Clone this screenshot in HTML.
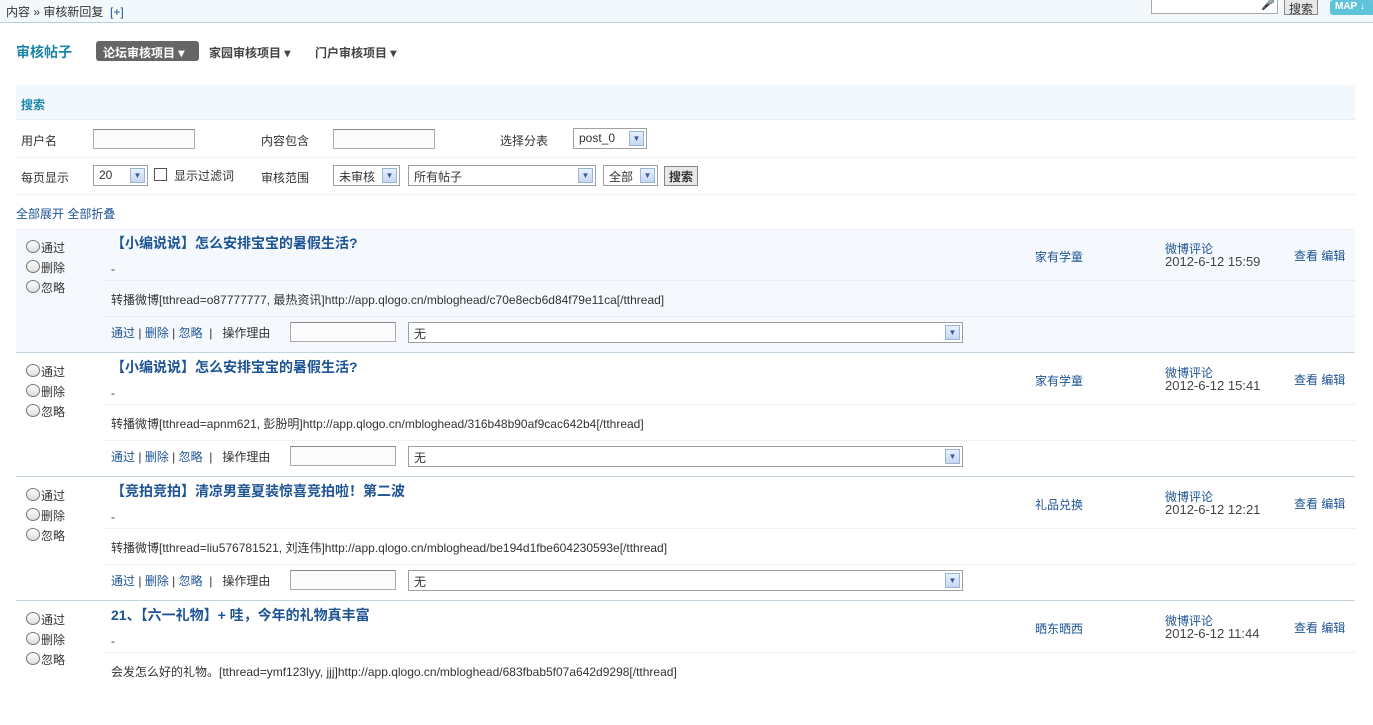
<!DOCTYPE html>
<html><head><meta charset="utf-8"><style>
*{margin:0;padding:0;box-sizing:border-box}
body{width:1373px;height:684px;overflow:hidden;background:#fff;font-family:"Liberation Sans","Noto Sans CJK SC",sans-serif;font-size:12px;color:#333;position:relative}
.a{position:absolute;white-space:nowrap}
.top{position:absolute;left:0;top:0;width:1373px;height:23px;background:#f2f8fc;border-bottom:1px solid #b8cfdc}
.lnk{color:#1e5494}
.inp{position:absolute;height:20px;border:1px solid #aaa;background:#fbfbfb;border-top-color:#888}
.sel{position:absolute;height:21px;border:1px solid #a0a0a0;background:#fff;padding:2px 5px;font-size:12px}
.sel i{position:absolute;right:2px;top:2px;width:15px;height:15px;border:1px solid #9bb4d6;background:linear-gradient(#e8f0fc,#c5d7f2);font-style:normal;color:#3b5c98;font-size:8px;text-align:center;line-height:14px}
.btn{position:absolute;border:1px solid #888;background:#e8e8e8;padding:1px 4px;font-size:12px}
.dot{border-top:1px dotted #dde3ea}
.post{position:absolute;left:16px;width:1339px;height:124px;border-bottom:1px solid #c5d3dd}
.r{position:absolute;left:10px;width:14px;height:13px;border:1px solid #777;border-radius:50%;background:linear-gradient(#fff,#ddd)}
.t{font-weight:bold;font-size:14px;color:#1e5494}
</style></head><body>
<div class="top"></div>
<div class="a" style="left:6px;top:3px;color:#333">内容 » 审核新回复 &nbsp;<span class="lnk">[+]</span></div>
<div class="inp" style="left:1151px;top:-6px;width:127px;height:20px;background:#fff"></div>
<div class="a" style="left:1261px;top:-2px;font-size:11px">🎤</div>
<div class="btn" style="left:1284px;top:-3px;height:18px;padding-top:2px">搜索</div>
<div class="a" style="left:1330px;top:0;width:45px;height:15px;background:#5fc3da;border-radius:3px;color:#fff;font-weight:bold;font-size:10px;padding-left:5px;line-height:14px">MAP ↓</div>

<div class="a" style="left:16px;top:42px;font-size:14px;font-weight:bold;color:#1c86a8">审核帖子</div>
<div class="a" style="left:96px;top:41px;height:20px;width:103px;background:#666;border-radius:3px;color:#fff;font-weight:bold;padding:3px 7px">论坛审核项目 ▾</div>
<div class="a" style="left:209px;top:44px;font-weight:bold;color:#444">家园审核项目 ▾</div>
<div class="a" style="left:315px;top:44px;font-weight:bold;color:#444">门户审核项目 ▾</div>

<div class="a" style="left:16px;top:85px;width:1339px;height:35px;background:#f2f8fc;border-bottom:1px dotted #dde3ea"></div>
<div class="a" style="left:21px;top:96px;font-weight:bold;color:#1c86a8">搜索</div>
<div class="a" style="left:16px;top:157px;width:1339px" class="dot"></div>
<div class="a dot" style="left:16px;top:157px;width:1339px"></div>
<div class="a dot" style="left:16px;top:194px;width:1339px"></div>

<div class="a" style="left:21px;top:132px">用户名</div>
<div class="inp" style="left:93px;top:129px;width:102px"></div>
<div class="a" style="left:261px;top:132px">内容包含</div>
<div class="inp" style="left:333px;top:129px;width:102px"></div>
<div class="a" style="left:500px;top:132px">选择分表</div>
<div class="sel" style="left:573px;top:128px;width:74px">post_0<i>▼</i></div>

<div class="a" style="left:21px;top:169px">每页显示</div>
<div class="sel" style="left:93px;top:165px;width:55px">20<i>▼</i></div>
<div class="a" style="left:154px;top:168px;width:13px;height:13px;border:1px solid #555;background:#fff"></div>
<div class="a" style="left:174px;top:167px">显示过滤词</div>
<div class="a" style="left:261px;top:169px">审核范围</div>
<div class="sel" style="left:333px;top:165px;width:67px">未审核<i>▼</i></div>
<div class="sel" style="left:408px;top:165px;width:188px">所有帖子<i>▼</i></div>
<div class="sel" style="left:603px;top:165px;width:55px">全部<i>▼</i></div>
<div class="btn" style="left:664px;top:166px;height:20px;font-weight:bold">搜索</div>

<div class="a lnk" style="left:16px;top:205px">全部展开 全部折叠</div>

<!-- posts -->
<div class="post" style="top:229px;background:#f5f9fd;border-top:1px solid #eef2f6"></div>
<div class="post" style="top:353px"></div>
<div class="post" style="top:477px"></div>
<div class="post" style="top:601px;border-bottom:none"></div>

<div id="posts"></div>
<script>
var P=[
[229,"【小编说说】怎么安排宝宝的暑假生活?","转播微博[tthread=o87777777, 最热资讯]http://app.qlogo.cn/mbloghead/c70e8ecb6d84f79e11ca[/tthread]","家有学童","2012-6-12 15:59"],
[353,"【小编说说】怎么安排宝宝的暑假生活?","转播微博[tthread=apnm621, 彭朌明]http://app.qlogo.cn/mbloghead/316b48b90af9cac642b4[/tthread]","家有学童","2012-6-12 15:41"],
[477,"【竞拍竞拍】清凉男童夏装惊喜竞拍啦！第二波","转播微博[tthread=liu576781521, 刘连伟]http://app.qlogo.cn/mbloghead/be194d1fbe604230593e[/tthread]","礼品兑换","2012-6-12 12:21"],
[601,"21、【六一礼物】+ 哇，今年的礼物真丰富","会发怎么好的礼物。[tthread=ymf123lyy, jjj]http://app.qlogo.cn/mbloghead/683fbab5f07a642d9298[/tthread]","晒东晒西","2012-6-12 11:44"]];
var h="";
P.forEach(function(p,i){var y=p[0];
h+='<div class="r a" style="left:26px;top:'+(y+11)+'px"></div><div class="a" style="left:41px;top:'+(y+10)+'px">通过</div>';
h+='<div class="r a" style="left:26px;top:'+(y+31)+'px"></div><div class="a" style="left:41px;top:'+(y+30)+'px">删除</div>';
h+='<div class="r a" style="left:26px;top:'+(y+51)+'px"></div><div class="a" style="left:41px;top:'+(y+50)+'px">忽略</div>';
h+='<div class="a t" style="left:111px;top:'+(y+4)+'px">'+p[1]+'</div>';
h+='<div class="a" style="left:111px;top:'+(y+33)+'px">-</div>';
h+='<div class="a dot" style="left:105px;top:'+(y+51)+'px;width:1250px"></div>';
h+='<div class="a" style="left:111px;top:'+(y+62)+'px">'+p[2]+'</div>';
if(i<3){
h+='<div class="a dot" style="left:105px;top:'+(y+87)+'px;width:1250px"></div>';
h+='<div class="a" style="left:111px;top:'+(y+95)+'px"><span class="lnk">通过</span> | <span class="lnk">删除</span> | <span class="lnk">忽略</span> &nbsp;| &nbsp; 操作理由</div>';
h+='<div class="inp" style="left:290px;top:'+(y+93)+'px;width:106px"></div>';
h+='<div class="sel" style="left:408px;top:'+(y+93)+'px;width:555px">无<i>▼</i></div>';}
h+='<div class="a lnk" style="left:1035px;top:'+(y+19)+'px">'+p[3]+'</div>';
h+='<div class="a lnk" style="left:1165px;top:'+(y+11)+'px">微博评论</div>';
h+='<div class="a" style="left:1165px;top:'+(y+25)+'px;font-size:13px;color:#444">'+p[4]+'</div>';
h+='<div class="a lnk" style="left:1294px;top:'+(y+18)+'px">查看 编辑</div>';
});
document.getElementById("posts").innerHTML=h;
</script>
</body></html>
